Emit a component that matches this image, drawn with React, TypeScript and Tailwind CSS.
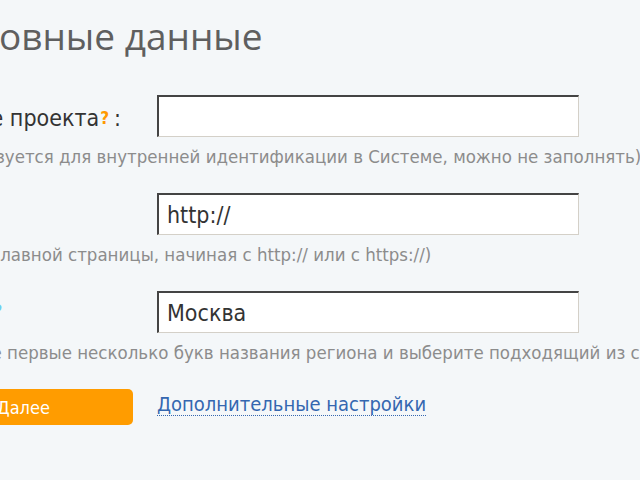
import { FC } from "react";

const FONT = { fontFamily: '"DejaVu Sans Condensed", "DejaVu Sans", sans-serif' };

type Row = {
    label?: string;
    hint: string;
    value?: string;
    help?: string;
};

const ROWS: Row[] = [
    {
        label: "Название проекта",
        help: "text-[#ff9900]",
        hint: "(используется для внутренней идентификации в Системе, можно не заполнять)",
    },
    {
        value: "http://",
        hint: "(адрес главной страницы, начиная с http:// или с https://)",
    },
    {
        help: "text-[#6ccff0]",
        value: "Москва",
        hint: "Введите первые несколько букв названия региона и выберите подходящий из списка",
    },
];

const App: FC = () => {
    return (
        <div className="w-[640px] h-[480px] overflow-hidden bg-[#f4f7f9]" style={FONT}>
            <div className="ml-[-72px] pt-[10px]">
                {/* заголовок */}
                <h1
                    className="pl-[1px] text-[37px] leading-[52px] text-[#5f5f5f] whitespace-nowrap"
                    style={{ fontFamily: '"Open Sans", sans-serif' }}
                >
                    Основные данные
                </h1>

                <div className="mt-[33px] flex flex-col">
                    {ROWS.map((row, i) => (
                        <div key={i} className="flex flex-col mb-[26px]">
                            <div className="flex items-center">
                                <label className="w-[193px] h-[42px] shrink-0 flex items-center text-[23px] text-[#333] whitespace-nowrap">
                                    {row.label ? (
                                        <span className="w-full flex justify-end items-baseline pt-[4px]">
                                            <span>{row.label}</span>
                                            <sup className={`${row.help} font-bold text-[17px] relative top-[-2px] ml-[1px]`}>?</sup>
                                            <span className="ml-[5px]">:</span>
                                        </span>
                                    ) : row.help ? (
                                        <span className={`${row.help} pl-[64px] font-bold text-[20px] pb-[2px]`}>?</span>
                                    ) : null}
                                </label>
                                <input
                                    className="ml-[36px] w-[422px] h-[42px] bg-white px-[8px] text-[23px] text-[#333] outline-none border-t-2 border-l-2 border-r border-b border-t-[#444] border-l-[#444] border-r-[#d4d0c8] border-b-[#d4d0c8]"
                                    defaultValue={row.value ?? ""}
                                    style={FONT}
                                />
                            </div>
                            <p className="mt-[10px] text-[18.5px] leading-[20px] text-[#8c8c8c] whitespace-nowrap">
                                {row.hint}
                            </p>
                        </div>
                    ))}
                </div>

                <div className="flex items-center">
                    <button className="w-[205px] h-[36px] rounded-[5px] bg-[#ff9c00] text-white text-[18px] text-left pl-[69px]">
                        Далее
                    </button>
                    <a
                        href="#"
                        className="ml-[24px] mb-[6px] text-[20px] text-[#3567b0] border-b border-dotted border-[#3567b0] leading-[22px]"
                    >
                        Дополнительные настройки
                    </a>
                </div>
            </div>
        </div>
    );
};

export default App;
